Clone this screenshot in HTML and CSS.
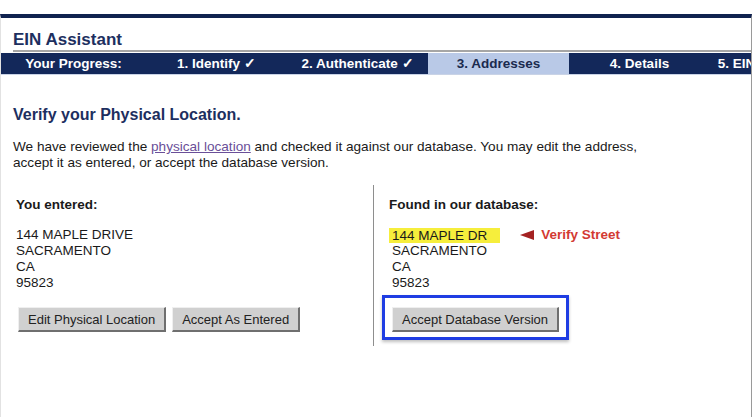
FILE: index.html
```html
<!DOCTYPE html>
<html lang="en">
<head>
    <meta charset="UTF-8">
    <title>EIN Assistant</title>
    <link rel="stylesheet" href="styles.css">
</head>
<body>
    <div class="page">
        <!-- Title -->
        <h1 class="title">EIN Assistant</h1>

        <!-- Progress bar -->
        <div class="progress">
            <div class="step">Your Progress:</div>
            <div class="step">1. Identify &#10003;</div>
            <div class="step">2. Authenticate &#10003;</div>
            <div class="step current">3. Addresses</div>
            <div class="step">4. Details</div>
            <div class="step">5. EIN Confirmation</div>
        </div>

        <!-- Main content -->
        <div class="content">
            <h2>Verify your Physical Location.</h2>
            <p class="intro">We have reviewed the <a href="#">physical location</a> and checked it against our database. You may edit the address,<br>accept it as entered, or accept the database version.</p>

            <div class="compare">
                <div class="col entered">
                    <h3>You entered:</h3>
                    <div class="address">
                        <div>144 MAPLE DRIVE</div>
                        <div>SACRAMENTO</div>
                        <div>CA</div>
                        <div>95823</div>
                    </div>
                    <div class="buttons">
                        <button>Edit Physical Location</button>
                        <button>Accept As Entered</button>
                    </div>
                </div>

                <div class="col found">
                    <h3>Found in our database:</h3>
                    <div class="address">
                        <div class="street-row">
                            <span class="highlight">144 MAPLE DR</span>
                            <span class="arrow"></span>
                            <span class="verify">Verify Street</span>
                        </div>
                        <div>SACRAMENTO</div>
                        <div>CA</div>
                        <div>95823</div>
                    </div>
                    <div class="callout">
                        <button>Accept Database Version</button>
                    </div>
                </div>
            </div>
        </div>
    </div>
</body>
</html>
```

FILE: styles.css
```css
/* Global */
body {
    margin: 0;
    padding-top: 14px;
    background-color: #fff;
    font-family: "Liberation Sans", Arial, sans-serif;
    color: #1a1a1a;
}

.page {
    box-sizing: border-box;
    min-height: calc(100vh - 14px);
    border-top: 4px solid #10224f;
    border-left: 1px solid #e2e2e2;
    border-right: 1px solid #9a9a9a;
    overflow: hidden;
    width: 752px;
}

/* Title */
.title {
    margin: 0 0 1px 12px;
    padding-top: 12px;
    font-size: 17px;
    line-height: 20px;
    color: #1d2f5f;
    border-bottom: 2px solid #a6a6a6;
}

/* Progress bar */
.progress {
    display: grid;
    grid-template-columns: 145px repeat(5, 141px);
    background-color: #13285a;
    border-bottom: 1px solid #c9d3e6;
    width: 850px;
}

.step {
    height: 21px;
    line-height: 21px;
    text-align: center;
    white-space: nowrap;
    color: #fff;
    font-size: 13.5px;
    font-weight: bold;
}

.step.current {
    background-color: #b9c9e7;
    color: #1b2a4e;
}

/* Content */
.content {
    padding: 30px 12px 0 12px;
}

.content h2 {
    margin: 0;
    font-size: 16px;
    line-height: 19px;
    color: #1d2f5f;
}

.intro {
    margin: 15px 0 0 0;
    font-size: 13.6px;
    line-height: 16px;
}

.intro a {
    color: #6a4f98;
}

/* Compare columns */
.compare {
    display: flex;
    margin-top: 14px;
}

.col {
    padding-top: 12px;
    padding-bottom: 6px;
}

.col.entered {
    width: 357px;
    padding-left: 3px;
    border-right: 1px solid #8e8e8e;
}

.col.found {
    padding-left: 15px;
}

.col h3 {
    margin: 0;
    font-size: 13.5px;
    line-height: 16px;
}

.address {
    margin-top: 14px;
    font-size: 13.5px;
    line-height: 16px;
}

.found .address div {
    padding-left: 3px;
}

.found .address .street-row {
    display: flex;
    align-items: center;
    padding-left: 0;
}

.highlight {
    background-color: #f6ee3c;
    padding: 0 13px 0 3px;
    line-height: 15px;
}

.arrow {
    width: 0;
    height: 0;
    margin-left: 20px;
    border-top: 5px solid transparent;
    border-bottom: 5px solid transparent;
    border-right: 14px solid #a42222;
}

.verify {
    margin-left: 7px;
    color: #d33a33;
    font-weight: bold;
}

/* Buttons */
.buttons {
    display: flex;
    gap: 6px;
    margin-top: 16px;
    margin-left: 2px;
}

button {
    font-family: "Liberation Sans", Arial, sans-serif;
    font-size: 13px;
    line-height: 15px;
    color: #222;
    background-color: #d0d0d0;
    padding: 4px 9px 3px 9px;
    border-top: 1px solid #efefef;
    border-left: 1px solid #efefef;
    border-bottom: 2px solid #6f6f6f;
    border-right: 2px solid #6f6f6f;
    border-radius: 0;
}

/* Blue callout box around the database button */
.callout {
    display: inline-block;
    margin: 4px 0 0 -7px;
    padding: 9px 7px 5px 7px;
    border: 3px solid #1f3de3;
    box-shadow: 0 2px 3px rgba(0, 0, 0, 0.25);
}

.callout button {
    display: block;
}
```
